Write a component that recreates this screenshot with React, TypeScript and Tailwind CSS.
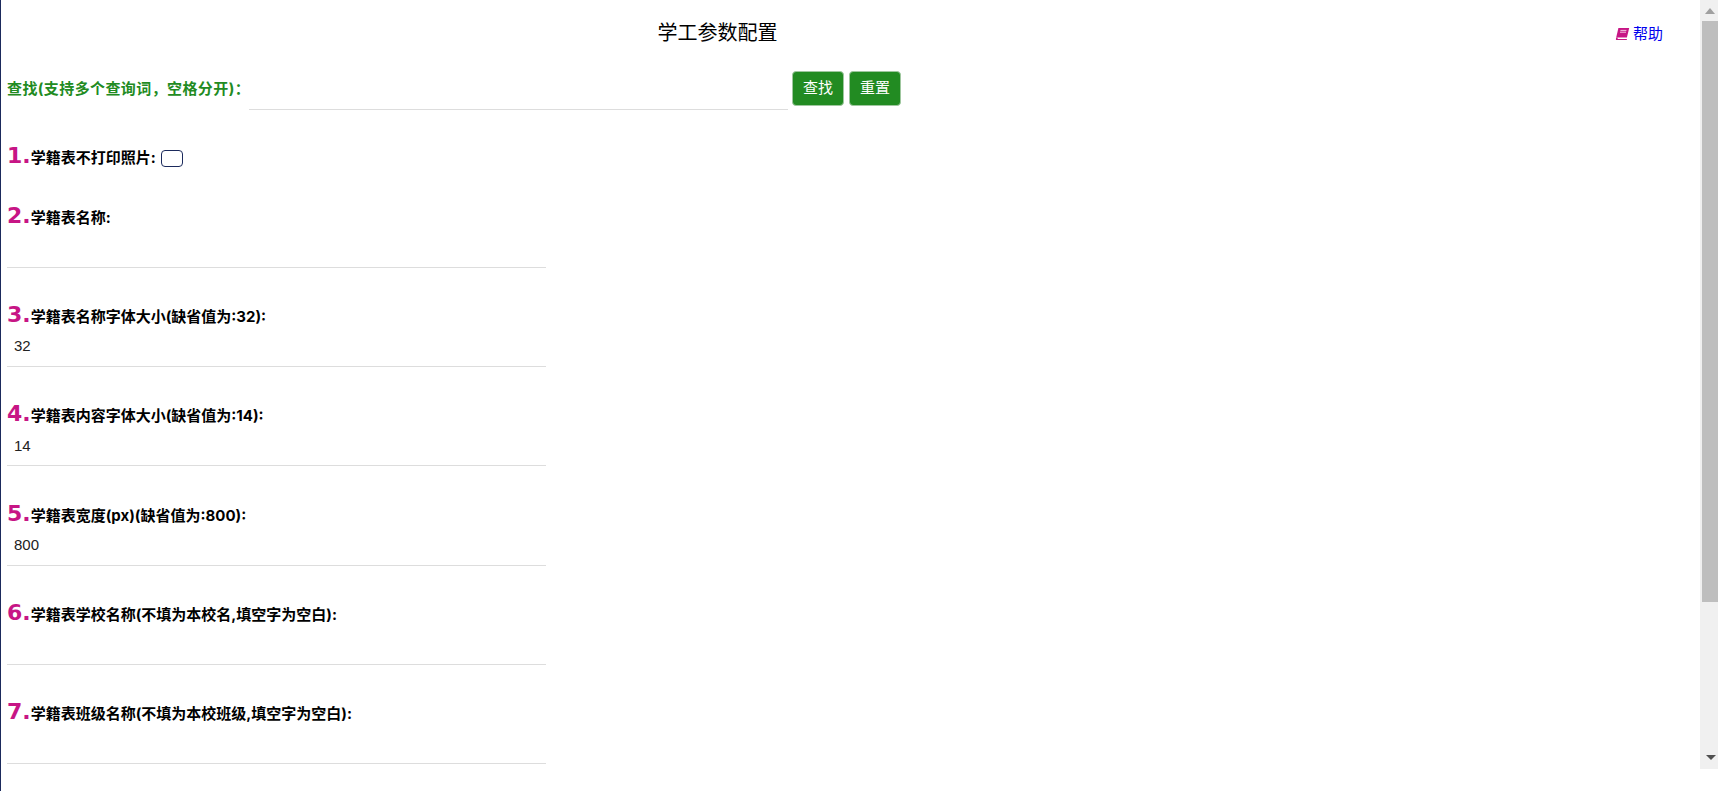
import React from "react";

const CJK = '"Liberation Sans","Noto Sans CJK SC",sans-serif';
const LABEL = '"Inter","Noto Sans CJK SC",sans-serif';

function Num({ n }: { n: number }) {
  return <span className="mb-[1px] font-['DejaVu_Sans'] text-[22px] font-bold leading-none text-[#c71585]">{n}.</span>;
}

function Label({ n, text }: { n: number; text: string }) {
  return (
    <div className="flex h-[28px] items-end">
      <Num n={n} />
      <span className="text-[15px] font-bold leading-[20px] text-black" style={{ fontFamily: LABEL }}>{text}</span>
    </div>
  );
}

function Field({ n, text, value }: { n: number; text: string; value?: string }) {
  return (
    <div className="mb-[31.2px] w-[539px]">
      <Label n={n} text={text} />
      <div className="flex h-[40px] items-center border-b border-[#dddddd] px-[7px] text-[15px] text-[#222222]">{value}</div>
    </div>
  );
}

export default function App() {
  const fields = [
    { n: 2, text: "学籍表名称:" },
    { n: 3, text: "学籍表名称字体大小(缺省值为:32):", value: "32" },
    { n: 4, text: "学籍表内容字体大小(缺省值为:14):", value: "14" },
    { n: 5, text: "学籍表宽度(px)(缺省值为:800):", value: "800" },
    { n: 6, text: "学籍表学校名称(不填为本校名,填空字为空白):" },
    { n: 7, text: "学籍表班级名称(不填为本校班级,填空字为空白):" },
  ];
  return (
    <div className="flex h-[791px] w-[1718px] overflow-hidden bg-white" style={{ fontFamily: CJK }}>
      <div className="h-full w-[1px] shrink-0 bg-[#1b2a5c]" />
      <div className="min-w-0 flex-1 px-[6px]">
        <div className="flex h-[64px] items-center pt-[2px]">
          <div className="flex-1 pr-[187px] text-center text-[20px] leading-[24px] text-black">学工参数配置</div>
          <div className="mr-[32px] mt-[2px] flex w-[47px] items-center text-[15px] text-[#0000ee]">
            <svg width="15" height="14" viewBox="0 0 15 14" className="mr-[3px] shrink-0">
              <path d="M3.4 1h10.8l-2.3 9.6H1.2z" fill="#c71585" />
              <path d="M1.2 10.6.9 12c-.1.6.3 1 .9 1h9.9l.3-1.1H2.6l.2-1.3z" fill="#c71585" />
              <path d="M5.4 3.4h6M5 5.2h6" stroke="#f7d6ea" strokeWidth="0.9" />
            </svg>
            <span className="whitespace-nowrap">帮助</span>
          </div>
        </div>
        <div className="flex h-[46px] items-center">
          <span className="mt-[4px] w-[242px] shrink-0 whitespace-nowrap text-[15px] font-bold tracking-[0.4px] text-[#228b22]" style={{ fontFamily: LABEL }}>查找(支持多个查询词，空格分开)：</span>
          <div className="h-[46px] w-[539px] border-b border-[#dddddd]" />
          <button className="ml-[4px] mt-[2px] h-[35px] w-[52px] rounded-[4px] border border-[#9fc79f] bg-[#228b22] text-[15px] text-white">查找</button>
          <button className="ml-[5px] mt-[2px] h-[35px] w-[52px] rounded-[4px] border border-[#9fc79f] bg-[#228b22] text-[15px] text-white">重置</button>
        </div>
        <div className="mt-[30px] flex h-[28px] items-end">
          <Num n={1} />
          <span className="text-[15px] font-bold leading-[20px] text-black" style={{ fontFamily: LABEL }}>学籍表不打印照片:</span>
          <input type="checkbox" className="mb-[1px] ml-[5px] h-[17px] w-[22px] appearance-none rounded-[4px] border border-[#1b2a5c] bg-white" />
        </div>
        <div className="mt-[32px]">
          {fields.map((f) => (
            <Field key={f.n} {...f} />
          ))}
        </div>
      </div>
      <div className="relative h-[769px] w-[18px] shrink-0 bg-[#f0f0f0]">
        <div className="flex h-[21px] items-center justify-center pl-[2px]">
          <div className="h-0 w-0 border-x-[5px] border-b-[6px] border-x-transparent border-b-[#a0a0a0]" />
        </div>
        <div className="ml-[2px] h-[581px] w-[16px] bg-[#bebebe]" />
        <div className="absolute bottom-[9px] left-[6px] h-0 w-0 border-x-[5px] border-t-[5px] border-x-transparent border-t-[#505050]" />
      </div>
    </div>
  );
}
